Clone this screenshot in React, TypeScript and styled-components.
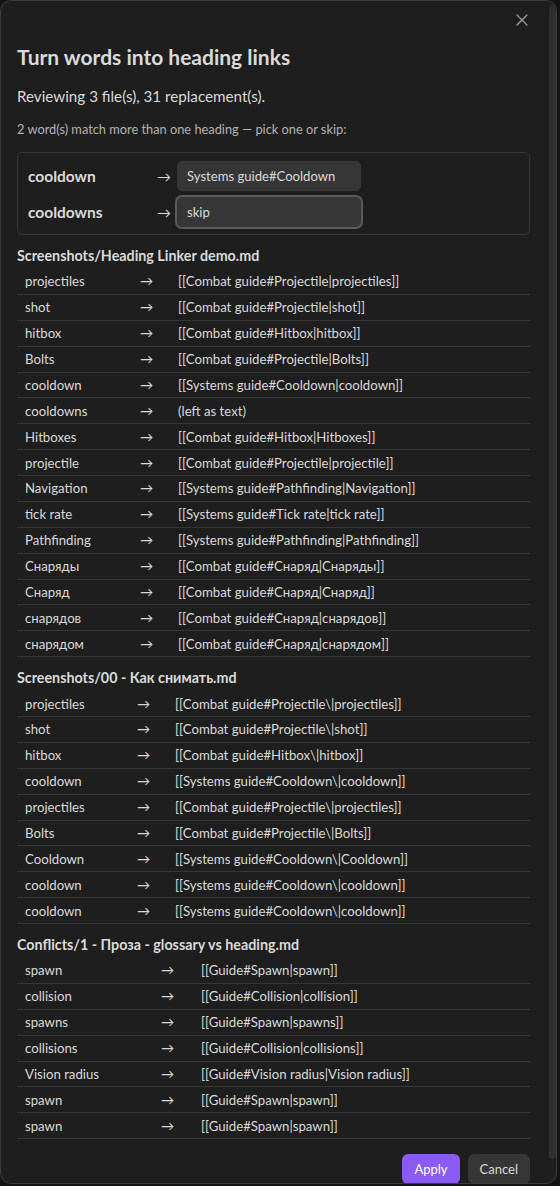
import styled, { createGlobalStyle } from 'styled-components';
import { X } from 'lucide-react';

const GlobalStyle = createGlobalStyle`
  html, body {
    margin: 0;
    padding: 0;
    background: #141414;
  }
  body {
    font-family: Lato, "Noto Sans", sans-serif;
    color: #dadada;
  }
  * { box-sizing: border-box; }
`;

type Entry = [string, string];

const sections: { file: string; cols: [number, number]; rows: Entry[] }[] = [
  {
    file: 'Screenshots/Heading Linker demo.md',
    cols: [115, 38],
    rows: [
      ['projectiles', '[[Combat guide#Projectile|projectiles]]'],
      ['shot', '[[Combat guide#Projectile|shot]]'],
      ['hitbox', '[[Combat guide#Hitbox|hitbox]]'],
      ['Bolts', '[[Combat guide#Projectile|Bolts]]'],
      ['cooldown', '[[Systems guide#Cooldown|cooldown]]'],
      ['cooldowns', '(left as text)'],
      ['Hitboxes', '[[Combat guide#Hitbox|Hitboxes]]'],
      ['projectile', '[[Combat guide#Projectile|projectile]]'],
      ['Navigation', '[[Systems guide#Pathfinding|Navigation]]'],
      ['tick rate', '[[Systems guide#Tick rate|tick rate]]'],
      ['Pathfinding', '[[Systems guide#Pathfinding|Pathfinding]]'],
      ['Снаряды', '[[Combat guide#Снаряд|Снаряды]]'],
      ['Снаряд', '[[Combat guide#Снаряд|Снаряд]]'],
      ['снарядов', '[[Combat guide#Снаряд|снарядов]]'],
      ['снарядом', '[[Combat guide#Снаряд|снарядом]]'],
    ],
  },
  {
    file: 'Screenshots/00 - Как снимать.md',
    cols: [112, 38],
    rows: [
      ['projectiles', '[[Combat guide#Projectile\\|projectiles]]'],
      ['shot', '[[Combat guide#Projectile\\|shot]]'],
      ['hitbox', '[[Combat guide#Hitbox\\|hitbox]]'],
      ['cooldown', '[[Systems guide#Cooldown\\|cooldown]]'],
      ['projectiles', '[[Combat guide#Projectile\\|projectiles]]'],
      ['Bolts', '[[Combat guide#Projectile\\|Bolts]]'],
      ['Cooldown', '[[Systems guide#Cooldown\\|Cooldown]]'],
      ['cooldown', '[[Systems guide#Cooldown\\|cooldown]]'],
      ['cooldown', '[[Systems guide#Cooldown\\|cooldown]]'],
    ],
  },
  {
    file: 'Conflicts/1 - Проза - glossary vs heading.md',
    cols: [136, 40],
    rows: [
      ['spawn', '[[Guide#Spawn|spawn]]'],
      ['collision', '[[Guide#Collision|collision]]'],
      ['spawns', '[[Guide#Spawn|spawns]]'],
      ['collisions', '[[Guide#Collision|collisions]]'],
      ['Vision radius', '[[Guide#Vision radius|Vision radius]]'],
      ['spawn', '[[Guide#Spawn|spawn]]'],
      ['spawn', '[[Guide#Spawn|spawn]]'],
    ],
  },
];

const Modal = styled.div`
  position: relative;
  width: 557px;
  height: 1184px;
  border: 1px solid #3c3c3c;
  border-radius: 11px;
  background: #1e1e1e;
  overflow: hidden;
`;

// content is taller than the modal; it is clipped and shown scrolled to the top
const Scroller = styled.div`
  height: 100%;
  overflow: hidden;
  padding: 44px 26px 17px 16px;
`;

const ScrollThumb = styled.div`
  position: absolute;
  top: 4px;
  right: 0;
  width: 7px;
  height: 1154px;
  border-radius: 4px;
  background: #2f2f2f;
`;

const CloseButton = styled.button`
  position: absolute;
  top: 9px;
  right: 24px;
  width: 20px;
  height: 20px;
  padding: 0;
  border: none;
  background: none;
  color: #9a9a9a;
  display: flex;
  align-items: center;
  justify-content: center;
`;

const Title = styled.h2`
  margin: 0;
  font-size: 21px;
  line-height: 24px;
  font-weight: 700;
  color: #dadada;
`;

const Summary = styled.p`
  margin: 15px 0 0;
  font-size: 15.2px;
  line-height: 24px;
`;

const Hint = styled.p`
  margin: 11px 0 0;
  font-size: 12.8px;
  line-height: 20px;
  color: #b3b3b3;
`;

const ChoiceBox = styled.div`
  margin: 13px 0 3px;
  border: 1px solid #363636;
  border-radius: 5px;
  padding: 8px 10px 7px;
  display: flex;
  flex-direction: column;
  gap: 6px;
`;

const ChoiceRow = styled.div`
  display: grid;
  grid-template-columns: 129px 20px 184px;
  align-items: center;
`;

const Word = styled.span`
  font-size: 15.5px;
  font-weight: 700;
  color: #dadada;
`;

const Arrow = styled.span`
  font-size: 14px;
  color: #dadada;
`;

const Select = styled.div<{ $focused?: boolean }>`
  height: 30px;
  border-radius: 5px;
  background: #363636;
  padding: 0 10px;
  display: flex;
  align-items: center;
  font-size: 13.1px;
  color: #dadada;
  box-shadow: ${(p) => (p.$focused ? '0 0 0 2px #5a5a5a' : 'none')};
`;

const FileHeading = styled.h4`
  margin: 10px 0 2px;
  font-size: 14.3px;
  line-height: 22px;
  font-weight: 700;
  color: #dadada;
`;

const Row = styled.div<{ $cols: [number, number] }>`
  display: grid;
  grid-template-columns: ${(p) => `${p.$cols[0]}px ${p.$cols[1]}px 1fr`};
  height: 25.875px;
  align-items: center;
  border-bottom: 1px solid #363636;
  font-size: 13.2px;
  color: #dadada;

  & > span {
    padding: 0 8px;
    white-space: nowrap;
  }
`;

const Footer = styled.div`
  margin-top: 15px;
  display: flex;
  justify-content: flex-end;
  gap: 8px;
`;

const Button = styled.button<{ $primary?: boolean }>`
  height: 30px;
  padding: 0 12px;
  border: none;
  border-radius: 6px;
  font-family: inherit;
  font-size: 13px;
  background: ${(p) => (p.$primary ? '#8a5cf5' : '#363636')};
  color: ${(p) => (p.$primary ? '#ffffff' : '#dadada')};
`;

export default function App() {
  return (
    <>
      <GlobalStyle />
      <Modal>
        <CloseButton aria-label="Close">
          <X size={20} strokeWidth={1.6} />
        </CloseButton>
        <Scroller>
          <Title>Turn words into heading links</Title>
          <Summary>Reviewing 3 file(s), 31 replacement(s).</Summary>
          <Hint>2 word(s) match more than one heading — pick one or skip:</Hint>
          <ChoiceBox>
            <ChoiceRow>
              <Word>cooldown</Word>
              <Arrow>→</Arrow>
              <Select>Systems guide#Cooldown</Select>
            </ChoiceRow>
            <ChoiceRow>
              <Word>cooldowns</Word>
              <Arrow>→</Arrow>
              <Select $focused>skip</Select>
            </ChoiceRow>
          </ChoiceBox>
          {sections.map((s) => (
            <div key={s.file}>
              <FileHeading>{s.file}</FileHeading>
              {s.rows.map(([word, link], i) => (
                <Row key={i} $cols={s.cols}>
                  <span>{word}</span>
                  <span>→</span>
                  <span>{link}</span>
                </Row>
              ))}
            </div>
          ))}
          <Footer>
            <Button $primary>Apply</Button>
            <Button>Cancel</Button>
          </Footer>
        </Scroller>
        <ScrollThumb />
      </Modal>
    </>
  );
}
